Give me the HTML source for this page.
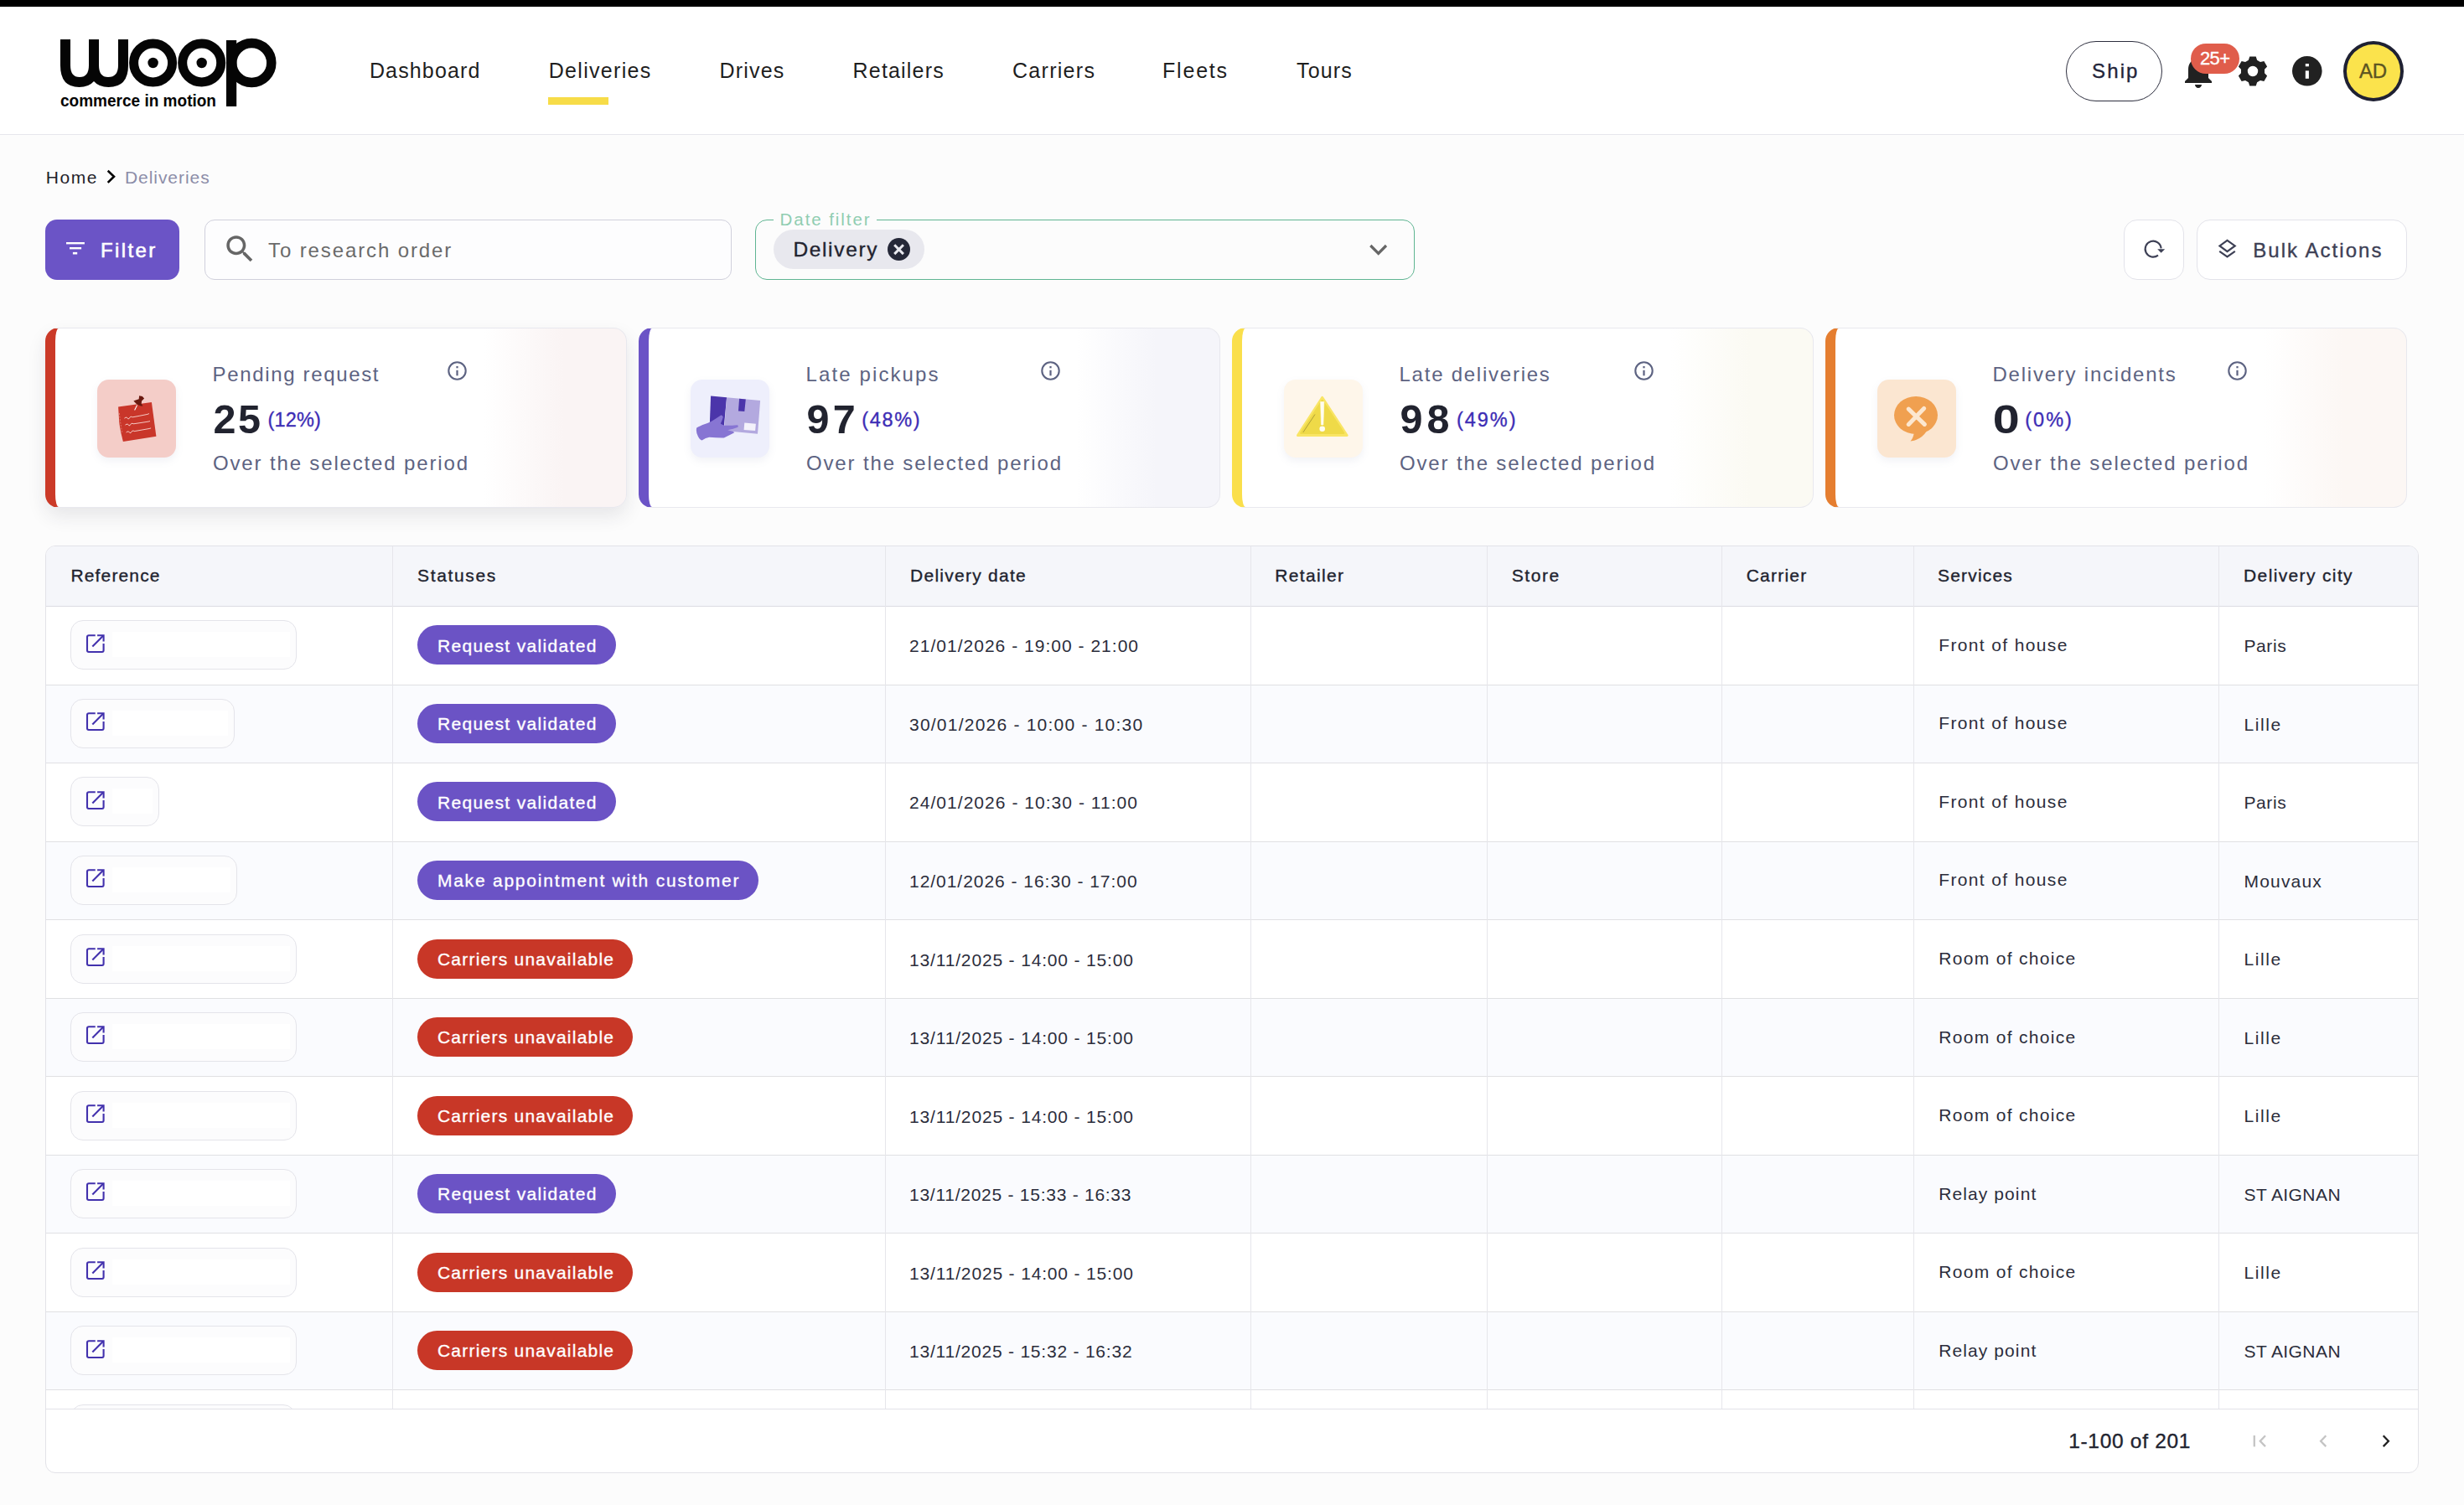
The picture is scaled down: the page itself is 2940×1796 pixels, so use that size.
<!DOCTYPE html>
<html><head><meta charset="utf-8"><title>Deliveries</title>
<style>
html,body{margin:0;padding:0;width:2940px;height:1796px;overflow:hidden;background:#fcfcfc;font-family:'Liberation Sans', sans-serif}
.t{position:absolute;white-space:nowrap;font-family:'Liberation Sans', sans-serif}
@media (max-width:2000px){html{zoom:0.5}}
</style></head><body>
<div style="position:absolute;left:0px;top:0px;width:2940px;height:8px;background:#000"></div>
<div style="position:absolute;left:0px;top:8px;width:2940px;height:152px;background:#fff"></div>
<div style="position:absolute;left:0px;top:160px;width:2940px;height:1px;background:#e6e6ec"></div>
<div style="position:absolute;left:654px;top:116px;width:72px;height:9px;background:#f7dc48"></div>
<div style="position:absolute;left:2465px;top:49px;width:115px;height:72px;box-sizing:border-box;border:1.6px solid #2d2e3e;border-radius:36px;background:#fff"></div>
<div style="position:absolute;left:2795.5px;top:49px;width:72.5px;height:72px;box-sizing:border-box;border:4px solid #1f2133;border-radius:50%;background:#fbe34c"></div>
<div style="position:absolute;left:54px;top:262px;width:160px;height:72px;background:#6b54c6;border-radius:14px"></div>
<div style="position:absolute;left:243.5px;top:262px;width:629px;height:72px;box-sizing:border-box;border:1.6px solid #d0d0dc;border-radius:12px;background:#fdfdfe"></div>
<div style="position:absolute;left:901px;top:262.3px;width:787px;height:71.5px;box-sizing:border-box;border:1.8px solid #5fb592;border-radius:14px;background:transparent"></div>
<div style="position:absolute;left:923px;top:255px;width:123px;height:12px;background:#fcfcfc"></div>
<div style="position:absolute;left:922.6px;top:274px;width:180.4px;height:47px;background:#e8e8ee;border-radius:24px"></div>
<div style="position:absolute;left:1059.3px;top:284.2px;width:27px;height:27px;background:#252838;border-radius:50%"></div>
<div style="position:absolute;left:2534px;top:262px;width:71.5px;height:72px;box-sizing:border-box;border:1.6px solid #e3e3ea;border-radius:16px;background:#fff"></div>
<div style="position:absolute;left:2621px;top:262px;width:251px;height:72px;box-sizing:border-box;border:1.6px solid #e3e3ea;border-radius:16px;background:#fff"></div>
<div style="position:absolute;left:54px;top:391.3px;width:693.5px;height:215px;box-sizing:border-box;border:1.5px solid #e8e8ee;border-left:12.5px solid #cb3a28;border-radius:16px;background:linear-gradient(90deg,#ffffff 75%,#faf4f4 89%);box-shadow:0 10px 22px rgba(40,40,60,0.10);"></div>
<div style="position:absolute;left:116px;top:453px;width:94px;height:93px;background:#f4cdc8;border-radius:14px;box-shadow:0 4px 10px rgba(120,130,170,0.10)"></div>
<div style="position:absolute;left:762px;top:391.3px;width:693.5px;height:215px;box-sizing:border-box;border:1.5px solid #e8e8ee;border-left:12.5px solid #6b53c6;border-radius:16px;background:linear-gradient(90deg,#ffffff 75%,#f5f5fa 89%);"></div>
<div style="position:absolute;left:824px;top:453px;width:94px;height:93px;background:#eeeffc;border-radius:14px;box-shadow:0 4px 10px rgba(120,130,170,0.10)"></div>
<div style="position:absolute;left:1470px;top:391.3px;width:693.5px;height:215px;box-sizing:border-box;border:1.5px solid #e8e8ee;border-left:12.5px solid #fadf4b;border-radius:16px;background:linear-gradient(90deg,#ffffff 75%,#fbfaf3 89%);"></div>
<div style="position:absolute;left:1532px;top:453px;width:94px;height:93px;background:#fef6ea;border-radius:14px;box-shadow:0 4px 10px rgba(120,130,170,0.10)"></div>
<div style="position:absolute;left:2178px;top:391.3px;width:693.5px;height:215px;box-sizing:border-box;border:1.5px solid #e8e8ee;border-left:12.5px solid #e57e30;border-radius:16px;background:linear-gradient(90deg,#ffffff 75%,#fcf7f4 89%);"></div>
<div style="position:absolute;left:2240px;top:453px;width:94px;height:93px;background:#fbe6d1;border-radius:14px;box-shadow:0 4px 10px rgba(120,130,170,0.10)"></div>
<div style="position:absolute;left:54px;top:651px;width:2832px;height:1107px;box-sizing:border-box;border:1px solid #e2e2e8;border-radius:12px;background:#fff;overflow:hidden"></div>
<div style="position:absolute;left:55px;top:652px;width:2830px;height:71px;background:#f5f6fa;border-radius:11px 11px 0 0"></div>
<div style="position:absolute;left:55px;top:818px;width:2830px;height:92px;background:#fafbfe"></div>
<div style="position:absolute;left:55px;top:1005px;width:2830px;height:92px;background:#fafbfe"></div>
<div style="position:absolute;left:55px;top:1192px;width:2830px;height:92px;background:#fafbfe"></div>
<div style="position:absolute;left:55px;top:1379px;width:2830px;height:92px;background:#fafbfe"></div>
<div style="position:absolute;left:55px;top:1566px;width:2830px;height:92px;background:#fafbfe"></div>
<div style="position:absolute;left:55px;top:723px;width:2830px;height:1px;background:#dcdce2"></div>
<div style="position:absolute;left:55px;top:817px;width:2830px;height:1px;background:#e0e0e3"></div>
<div style="position:absolute;left:55px;top:910px;width:2830px;height:1px;background:#e0e0e3"></div>
<div style="position:absolute;left:55px;top:1004px;width:2830px;height:1px;background:#e0e0e3"></div>
<div style="position:absolute;left:55px;top:1097px;width:2830px;height:1px;background:#e0e0e3"></div>
<div style="position:absolute;left:55px;top:1191px;width:2830px;height:1px;background:#e0e0e3"></div>
<div style="position:absolute;left:55px;top:1284px;width:2830px;height:1px;background:#e0e0e3"></div>
<div style="position:absolute;left:55px;top:1378px;width:2830px;height:1px;background:#e0e0e3"></div>
<div style="position:absolute;left:55px;top:1471px;width:2830px;height:1px;background:#e0e0e3"></div>
<div style="position:absolute;left:55px;top:1565px;width:2830px;height:1px;background:#e0e0e3"></div>
<div style="position:absolute;left:55px;top:1658px;width:2830px;height:1px;background:#e0e0e3"></div>
<div style="position:absolute;left:55px;top:1681px;width:2830px;height:1px;background:#e2e2e8"></div>
<div style="position:absolute;left:468px;top:652px;width:1px;height:1029px;background:#e6e6eb"></div>
<div style="position:absolute;left:1056px;top:652px;width:1px;height:1029px;background:#e6e6eb"></div>
<div style="position:absolute;left:1492px;top:652px;width:1px;height:1029px;background:#e6e6eb"></div>
<div style="position:absolute;left:1774px;top:652px;width:1px;height:1029px;background:#e6e6eb"></div>
<div style="position:absolute;left:2054px;top:652px;width:1px;height:1029px;background:#e6e6eb"></div>
<div style="position:absolute;left:2283px;top:652px;width:1px;height:1029px;background:#e6e6eb"></div>
<div style="position:absolute;left:2647px;top:652px;width:1px;height:1029px;background:#e6e6eb"></div>
<div style="position:absolute;left:84.3px;top:740.3px;width:270.2px;height:59px;box-sizing:border-box;border:1.5px solid #e4e4ea;border-radius:15px;background:#fcfcfd"></div>
<div style="position:absolute;left:133.8px;top:754.3px;width:212px;height:30px;background:#ffffff"></div>
<div style="position:absolute;left:498px;top:746.3px;width:237px;height:47px;background:#6b53c5;border-radius:24px"></div>
<div style="position:absolute;left:84.3px;top:833.85px;width:196.2px;height:59px;box-sizing:border-box;border:1.5px solid #e4e4ea;border-radius:15px;background:#fcfcfd"></div>
<div style="position:absolute;left:133.8px;top:847.85px;width:138px;height:30px;background:#ffffff"></div>
<div style="position:absolute;left:498px;top:839.85px;width:237px;height:47px;background:#6b53c5;border-radius:24px"></div>
<div style="position:absolute;left:84.3px;top:927.4px;width:106.2px;height:59px;box-sizing:border-box;border:1.5px solid #e4e4ea;border-radius:15px;background:#fcfcfd"></div>
<div style="position:absolute;left:133.8px;top:941.4px;width:48px;height:30px;background:#ffffff"></div>
<div style="position:absolute;left:498px;top:933.4px;width:237px;height:47px;background:#6b53c5;border-radius:24px"></div>
<div style="position:absolute;left:84.3px;top:1020.95px;width:199.2px;height:59px;box-sizing:border-box;border:1.5px solid #e4e4ea;border-radius:15px;background:#fcfcfd"></div>
<div style="position:absolute;left:133.8px;top:1034.95px;width:141px;height:30px;background:#ffffff"></div>
<div style="position:absolute;left:498px;top:1026.95px;width:407px;height:47px;background:#6b53c5;border-radius:24px"></div>
<div style="position:absolute;left:84.3px;top:1114.5px;width:270.2px;height:59px;box-sizing:border-box;border:1.5px solid #e4e4ea;border-radius:15px;background:#fcfcfd"></div>
<div style="position:absolute;left:133.8px;top:1128.5px;width:212px;height:30px;background:#ffffff"></div>
<div style="position:absolute;left:498px;top:1120.5px;width:257px;height:47px;background:#c83727;border-radius:24px"></div>
<div style="position:absolute;left:84.3px;top:1208.05px;width:270.2px;height:59px;box-sizing:border-box;border:1.5px solid #e4e4ea;border-radius:15px;background:#fcfcfd"></div>
<div style="position:absolute;left:133.8px;top:1222.05px;width:212px;height:30px;background:#ffffff"></div>
<div style="position:absolute;left:498px;top:1214.05px;width:257px;height:47px;background:#c83727;border-radius:24px"></div>
<div style="position:absolute;left:84.3px;top:1301.6px;width:270.2px;height:59px;box-sizing:border-box;border:1.5px solid #e4e4ea;border-radius:15px;background:#fcfcfd"></div>
<div style="position:absolute;left:133.8px;top:1315.6px;width:212px;height:30px;background:#ffffff"></div>
<div style="position:absolute;left:498px;top:1307.6px;width:257px;height:47px;background:#c83727;border-radius:24px"></div>
<div style="position:absolute;left:84.3px;top:1395.15px;width:270.2px;height:59px;box-sizing:border-box;border:1.5px solid #e4e4ea;border-radius:15px;background:#fcfcfd"></div>
<div style="position:absolute;left:133.8px;top:1409.15px;width:212px;height:30px;background:#ffffff"></div>
<div style="position:absolute;left:498px;top:1401.15px;width:237px;height:47px;background:#6b53c5;border-radius:24px"></div>
<div style="position:absolute;left:84.3px;top:1488.7px;width:270.2px;height:59px;box-sizing:border-box;border:1.5px solid #e4e4ea;border-radius:15px;background:#fcfcfd"></div>
<div style="position:absolute;left:133.8px;top:1502.7px;width:212px;height:30px;background:#ffffff"></div>
<div style="position:absolute;left:498px;top:1494.7px;width:257px;height:47px;background:#c83727;border-radius:24px"></div>
<div style="position:absolute;left:84.3px;top:1582.25px;width:270.2px;height:59px;box-sizing:border-box;border:1.5px solid #e4e4ea;border-radius:15px;background:#fcfcfd"></div>
<div style="position:absolute;left:133.8px;top:1596.25px;width:212px;height:30px;background:#ffffff"></div>
<div style="position:absolute;left:498px;top:1588.25px;width:257px;height:47px;background:#c83727;border-radius:24px"></div>
<div style="position:absolute;left:54px;top:1660px;width:2832px;height:21px;overflow:hidden"><div style="position:absolute;left:30.299999999999997px;top:15.5px;width:269px;height:59px;box-sizing:border-box;border:1.5px solid #e4e4ea;border-radius:15px;background:#fcfcfd"></div></div>
<svg style="position:absolute;left:0px;top:0px" width="400" height="160" viewBox="0 0 400 160"><g fill="#050505">
<path d="M72 47 H84 V78 Q84 92 95 92 Q106 92 106 78 V47 H118 V78 Q118 92 129 92 Q141 92 141 78 V47 H153 V78 Q153 104 129.5 104 Q118 104 112 97 Q106 104 94.5 104 Q72 104 72 78 Z"/>
</g>
<circle cx="182.6" cy="75" r="23" fill="none" stroke="#050505" stroke-width="11"/>
<circle cx="182.6" cy="75" r="6.2" fill="#050505"/>
<circle cx="240.7" cy="75" r="23" fill="none" stroke="#050505" stroke-width="11"/>
<circle cx="240.7" cy="75" r="6.2" fill="#050505"/>
<circle cx="300.3" cy="75" r="23.5" fill="none" stroke="#050505" stroke-width="11.5"/>
<rect x="270" y="48" width="12.2" height="79" fill="#050505"/>
<text x="72" y="127" font-family="Liberation Sans" font-weight="700" font-size="19.5" fill="#050505" textLength="186" lengthAdjust="spacingAndGlyphs">commerce in motion</text>
</svg>
<svg style="position:absolute;left:2599px;top:61px" width="48" height="48" viewBox="0 0 24 24"><path fill="#212121" d="M12 22c1.1 0 2-.9 2-2h-4c0 1.1.89 2 2 2zm6-6v-5c0-3.07-1.64-5.64-4.5-6.32V4c0-.83-.67-1.5-1.5-1.5s-1.5.67-1.5 1.5v.68C7.63 5.36 6 7.92 6 11v5l-2 2v1h16v-1l-2-2z"/></svg>
<svg style="position:absolute;left:2614px;top:52px" width="58" height="36" viewBox="0 0 58 36"><rect x="0" y="0" width="58" height="36" rx="18" fill="#e05d4b"/></svg>
<svg style="position:absolute;left:2670.2px;top:66.8px" width="36" height="36" viewBox="0 0 36 36"><path fill="#212121" fill-rule="evenodd" d="M23.09,4.74 L21.74,0.39 L14.26,0.39 L12.91,4.74 L9.06,6.96 L4.62,5.96 L0.88,12.44 L3.97,15.78 L3.97,20.22 L0.88,23.56 L4.62,30.04 L9.06,29.04 L12.91,31.26 L14.26,35.61 L21.74,35.61 L23.09,31.26 L26.94,29.04 L31.38,30.04 L35.12,23.56 L32.03,20.22 L32.03,15.78 L35.12,12.44 L31.38,5.96 L26.94,6.96 Z M24.2,18 A6.2,6.2 0 1 0 11.8,18 A6.2,6.2 0 1 0 24.2,18 Z"/></svg>
<svg style="position:absolute;left:2735px;top:67px" width="36" height="36" viewBox="0 0 36 36"><circle cx="17.8" cy="17.8" r="17.8" fill="#212121"/><rect x="15.8" y="9" width="4.1" height="3.3" fill="#fff"/><rect x="15.8" y="17.4" width="4.1" height="9.4" fill="#fff"/></svg>
<svg style="position:absolute;left:120px;top:198px" width="24" height="26" viewBox="0 0 24 26"><path d="M8.7,5.8 L16,12.7 L8.7,19.9" fill="none" stroke="#000" stroke-width="2.6"/></svg>
<svg style="position:absolute;left:79px;top:289px" width="22" height="15" viewBox="0 0 22 15"><rect x="0" y="0" width="21.9" height="2.4" fill="#fff"/><rect x="4" y="6" width="14.1" height="2.4" fill="#fff"/><rect x="7.9" y="11.9" width="5.3" height="2.6" fill="#fff"/></svg>
<svg style="position:absolute;left:264.7px;top:276.4px" width="42.5" height="42.5" viewBox="0 0 24 24"><path fill="#666" d="M15.5 14h-.79l-.28-.27C15.41 12.59 16 11.11 16 9.5 16 5.91 13.09 3 9.5 3S3 5.91 3 9.5 5.91 16 9.5 16c1.61 0 3.09-.59 4.23-1.57l.27.28v.79l5 4.99L20.49 19l-4.99-5zm-6 0C7.01 14 5 11.990 5 9.5S7.01 5 9.5 5 14 7.01 14 9.5 11.99 14 9.5 14z"/></svg>
<svg style="position:absolute;left:1059.3px;top:284.2px" width="27" height="27" viewBox="0 0 27 27"><path d="M8.2,8.3 L18.9,19.1 M18.9,8.3 L8.2,19.1" stroke="#e8e8ee" stroke-width="3" stroke-linecap="butt"/></svg>
<svg style="position:absolute;left:1630px;top:286px" width="30" height="22" viewBox="0 0 30 22"><path d="M5.3,7 L14.7,16.4 L24,7" fill="none" stroke="#666" stroke-width="3.2"/></svg>
<svg style="position:absolute;left:2554px;top:282px" width="30" height="30" viewBox="0 0 30 30"><path d="M21,22.6 A9.5,9.5 0 1 1 24.6,14.3" fill="none" stroke="#3d4055" stroke-width="2.1"/><path d="M20.2,15.3 L29.2,15.3 L24.6,19.8 Z" fill="#3d4055"/></svg>
<svg style="position:absolute;left:2644px;top:282px" width="28" height="30" viewBox="0 0 28 30"><path d="M13.5,4.8 L4.5,11.4 L13.5,18.2 L22.7,11.4 Z" fill="none" stroke="#3d4055" stroke-width="2.2" stroke-linejoin="miter"/><path d="M4.2,17.9 L13.5,24.3 L22.8,17.9" fill="none" stroke="#3d4055" stroke-width="2.2"/></svg>
<svg style="position:absolute;left:532.7px;top:430.2px" width="25" height="25" viewBox="0 0 25 25"><circle cx="12.5" cy="12.5" r="10.2" fill="none" stroke="#5d6382" stroke-width="2.1"/><rect x="11.4" y="7" width="2.2" height="2.3" fill="#5d6382"/><rect x="11.4" y="11.8" width="2.2" height="6.5" fill="#5d6382"/></svg>
<svg style="position:absolute;left:1240.7px;top:430.2px" width="25" height="25" viewBox="0 0 25 25"><circle cx="12.5" cy="12.5" r="10.2" fill="none" stroke="#5d6382" stroke-width="2.1"/><rect x="11.4" y="7" width="2.2" height="2.3" fill="#5d6382"/><rect x="11.4" y="11.8" width="2.2" height="6.5" fill="#5d6382"/></svg>
<svg style="position:absolute;left:1948.7px;top:430.2px" width="25" height="25" viewBox="0 0 25 25"><circle cx="12.5" cy="12.5" r="10.2" fill="none" stroke="#5d6382" stroke-width="2.1"/><rect x="11.4" y="7" width="2.2" height="2.3" fill="#5d6382"/><rect x="11.4" y="11.8" width="2.2" height="6.5" fill="#5d6382"/></svg>
<svg style="position:absolute;left:2656.7px;top:430.2px" width="25" height="25" viewBox="0 0 25 25"><circle cx="12.5" cy="12.5" r="10.2" fill="none" stroke="#5d6382" stroke-width="2.1"/><rect x="11.4" y="7" width="2.2" height="2.3" fill="#5d6382"/><rect x="11.4" y="11.8" width="2.2" height="6.5" fill="#5d6382"/></svg>
<svg style="position:absolute;left:116px;top:453px" width="94" height="93" viewBox="0 0 94 93"><path d="M25.1,32.6 L64.9,27.1 L70.4,67.7 L30.9,73.9 Q27.5,62 26.2,50.5 Z" fill="#c9362a"/>
<path d="M50.1,19.2 L53.9,20 L56.1,22.6 L53.1,25.6 L52.7,28.7 L54.5,31.5 L51.9,31.4 L47,29.3 L43.4,25.6 L45.2,24.8 L49.7,23.2 Z" fill="#6a1a10"/>
<path d="M47.6,30.6 L44.6,36.5" stroke="#fff" stroke-width="1.1"/>
<path d="M26.4,40 Q27.5,52 29.8,63" fill="none" stroke="#e9a59b" stroke-width="0.6" stroke-dasharray="2 1.5"/>
<path d="M32.4,46.2 q1.5,-1.5 3,-1 q1.5,2.5 2.5,1.5 q1.5,-3 3,-2.5 q1,1 2,0.5 l8,-1.5 l9,-1.8 l2,-0.8" fill="none" stroke="#fbe3de" stroke-width="0.85"/>
<path d="M33.5,54.2 q1.5,-1.5 3,-1 q1.5,2.5 2.5,1.5 q1.5,-3 3,-2.5 q1,1 2,0.5 l8,-1.2 l9,-1.4 l2,-0.6" fill="none" stroke="#fbe3de" stroke-width="0.85"/>
<path d="M34.6,63 q1.5,-1.5 3,-1 q1.5,2.5 2.5,1.5 q1.5,-3 3,-2.5 q1,1 2,0.5 l8,-1.4 l9,-1.6 l2,-0.6" fill="none" stroke="#fbe3de" stroke-width="0.85"/></svg>
<svg style="position:absolute;left:824px;top:453px" width="94" height="93" viewBox="0 0 94 93"><path d="M24.1,19.4 L43.1,21.2 L39.9,55 L22.8,54 Z" fill="#4b35aa"/>
<path d="M43.1,21.2 L83.1,24.9 L80,64.7 L39.9,61 Z" fill="#b3a9df"/>
<path d="M58.1,22.7 L65.8,23.4 L64.3,38 L57,37.6 Z" fill="#4b35aa"/>
<path d="M64.3,51.5 L77.9,52.7 L77.1,61 L63.6,60 Z" fill="#f4f2fb"/>
<path d="M7.2,57.5 Q6,63 9,68 Q11.5,72.5 13.5,72.4 Q18,69.5 22.3,68.7 Q31,69.5 39.8,69.4 Q46,66.5 52.3,63.2 Q50.5,61.5 44.2,60.3 Q51,58.8 56.5,56.8 Q57.2,54.3 55.5,54.2 Q48,55 40.6,54.8 Q37.5,54 35.8,52.6 Q37.8,48.5 38.8,44.8 Q37.8,42 36.2,42.6 Q32,45.5 28.2,47.8 Q24,50.8 20.1,52 Q13,54 7.2,57.5 Z" fill="#8775d3"/></svg>
<svg style="position:absolute;left:1532px;top:453px" width="94" height="93" viewBox="0 0 94 93"><path d="M45.7,21.5 L75,66.5 L16.6,66.5 Z" fill="#f9e565" stroke="#f9e565" stroke-width="3.2" stroke-linejoin="round"/>
<path d="M45.7,25 L71.2,63.8 L20.2,63.8 Z" fill="#efda48" stroke="#efda48" stroke-width="2.2" stroke-linejoin="round"/>
<path d="M43.6,26.5 L47.8,26.5 L46.9,54 L44.5,54 Z" fill="#fffdf0" stroke="#fffdf0" stroke-width="0.6" stroke-linejoin="round"/>
<circle cx="45.7" cy="58.8" r="3.3" fill="#fffdf0"/>
<path d="M22.8,63 L37,41.5" stroke="#3a3520" stroke-width="0.5" opacity="0.7"/></svg>
<svg style="position:absolute;left:2240px;top:453px" width="94" height="93" viewBox="0 0 94 93"><ellipse cx="46" cy="42.5" rx="26" ry="22.5" fill="#f0a050"/>
<path d="M44,62 Q43,70 39.5,73.5 Q52,72 58.5,62 Z" fill="#f0a050"/>
<path d="M37.3,35.1 L56.3,53.4 M55.6,34.4 L37.3,53.4" stroke="#fce7d0" stroke-width="5" stroke-linecap="round"/></svg>
<svg style="position:absolute;left:102px;top:755.6px" width="24" height="24" viewBox="0 0 24 24"><path d="M11.75,2.2 H4 Q2,2.2 2,4.2 V20 Q2,22 4,22 H19.8 Q21.6,22 21.6,20 V12.1" fill="none" stroke="#4231ad" stroke-width="2.1"/><path d="M14.1,2.2 H21.6 V9.6" fill="none" stroke="#4231ad" stroke-width="2.1"/><path d="M8.3,15.5 L21,2.8" stroke="#4231ad" stroke-width="2.1"/></svg>
<svg style="position:absolute;left:102px;top:849.15px" width="24" height="24" viewBox="0 0 24 24"><path d="M11.75,2.2 H4 Q2,2.2 2,4.2 V20 Q2,22 4,22 H19.8 Q21.6,22 21.6,20 V12.1" fill="none" stroke="#4231ad" stroke-width="2.1"/><path d="M14.1,2.2 H21.6 V9.6" fill="none" stroke="#4231ad" stroke-width="2.1"/><path d="M8.3,15.5 L21,2.8" stroke="#4231ad" stroke-width="2.1"/></svg>
<svg style="position:absolute;left:102px;top:942.7px" width="24" height="24" viewBox="0 0 24 24"><path d="M11.75,2.2 H4 Q2,2.2 2,4.2 V20 Q2,22 4,22 H19.8 Q21.6,22 21.6,20 V12.1" fill="none" stroke="#4231ad" stroke-width="2.1"/><path d="M14.1,2.2 H21.6 V9.6" fill="none" stroke="#4231ad" stroke-width="2.1"/><path d="M8.3,15.5 L21,2.8" stroke="#4231ad" stroke-width="2.1"/></svg>
<svg style="position:absolute;left:102px;top:1036.25px" width="24" height="24" viewBox="0 0 24 24"><path d="M11.75,2.2 H4 Q2,2.2 2,4.2 V20 Q2,22 4,22 H19.8 Q21.6,22 21.6,20 V12.1" fill="none" stroke="#4231ad" stroke-width="2.1"/><path d="M14.1,2.2 H21.6 V9.6" fill="none" stroke="#4231ad" stroke-width="2.1"/><path d="M8.3,15.5 L21,2.8" stroke="#4231ad" stroke-width="2.1"/></svg>
<svg style="position:absolute;left:102px;top:1129.8px" width="24" height="24" viewBox="0 0 24 24"><path d="M11.75,2.2 H4 Q2,2.2 2,4.2 V20 Q2,22 4,22 H19.8 Q21.6,22 21.6,20 V12.1" fill="none" stroke="#4231ad" stroke-width="2.1"/><path d="M14.1,2.2 H21.6 V9.6" fill="none" stroke="#4231ad" stroke-width="2.1"/><path d="M8.3,15.5 L21,2.8" stroke="#4231ad" stroke-width="2.1"/></svg>
<svg style="position:absolute;left:102px;top:1223.35px" width="24" height="24" viewBox="0 0 24 24"><path d="M11.75,2.2 H4 Q2,2.2 2,4.2 V20 Q2,22 4,22 H19.8 Q21.6,22 21.6,20 V12.1" fill="none" stroke="#4231ad" stroke-width="2.1"/><path d="M14.1,2.2 H21.6 V9.6" fill="none" stroke="#4231ad" stroke-width="2.1"/><path d="M8.3,15.5 L21,2.8" stroke="#4231ad" stroke-width="2.1"/></svg>
<svg style="position:absolute;left:102px;top:1316.9px" width="24" height="24" viewBox="0 0 24 24"><path d="M11.75,2.2 H4 Q2,2.2 2,4.2 V20 Q2,22 4,22 H19.8 Q21.6,22 21.6,20 V12.1" fill="none" stroke="#4231ad" stroke-width="2.1"/><path d="M14.1,2.2 H21.6 V9.6" fill="none" stroke="#4231ad" stroke-width="2.1"/><path d="M8.3,15.5 L21,2.8" stroke="#4231ad" stroke-width="2.1"/></svg>
<svg style="position:absolute;left:102px;top:1410.45px" width="24" height="24" viewBox="0 0 24 24"><path d="M11.75,2.2 H4 Q2,2.2 2,4.2 V20 Q2,22 4,22 H19.8 Q21.6,22 21.6,20 V12.1" fill="none" stroke="#4231ad" stroke-width="2.1"/><path d="M14.1,2.2 H21.6 V9.6" fill="none" stroke="#4231ad" stroke-width="2.1"/><path d="M8.3,15.5 L21,2.8" stroke="#4231ad" stroke-width="2.1"/></svg>
<svg style="position:absolute;left:102px;top:1504.0px" width="24" height="24" viewBox="0 0 24 24"><path d="M11.75,2.2 H4 Q2,2.2 2,4.2 V20 Q2,22 4,22 H19.8 Q21.6,22 21.6,20 V12.1" fill="none" stroke="#4231ad" stroke-width="2.1"/><path d="M14.1,2.2 H21.6 V9.6" fill="none" stroke="#4231ad" stroke-width="2.1"/><path d="M8.3,15.5 L21,2.8" stroke="#4231ad" stroke-width="2.1"/></svg>
<svg style="position:absolute;left:102px;top:1597.55px" width="24" height="24" viewBox="0 0 24 24"><path d="M11.75,2.2 H4 Q2,2.2 2,4.2 V20 Q2,22 4,22 H19.8 Q21.6,22 21.6,20 V12.1" fill="none" stroke="#4231ad" stroke-width="2.1"/><path d="M14.1,2.2 H21.6 V9.6" fill="none" stroke="#4231ad" stroke-width="2.1"/><path d="M8.3,15.5 L21,2.8" stroke="#4231ad" stroke-width="2.1"/></svg>
<svg style="position:absolute;left:2686px;top:1708px" width="22" height="22" viewBox="0 0 22 22"><path d="M3.8,5 V18.4" stroke="#c4c4c4" stroke-width="2.3"/><path d="M17,5.3 L10.8,11.7 L17,18.1" fill="none" stroke="#c4c4c4" stroke-width="2.3"/></svg>
<svg style="position:absolute;left:2762px;top:1708px" width="22" height="22" viewBox="0 0 22 22"><path d="M13.3,5.3 L7.1,11.7 L13.3,18.1" fill="none" stroke="#c4c4c4" stroke-width="2.3"/></svg>
<svg style="position:absolute;left:2838px;top:1708px" width="22" height="22" viewBox="0 0 22 22"><path d="M5.7,5.3 L11.9,11.7 L5.7,18.1" fill="none" stroke="#222" stroke-width="2.3"/></svg>
<div class="t" style="left:440.90px;top:72.00px;font-size:25px;line-height:25px;letter-spacing:1.150px;color:#1e1e1e;font-weight:400;">Dashboard</div>
<div class="t" style="left:654.70px;top:72.00px;font-size:25px;line-height:25px;letter-spacing:1.311px;color:#1e1e1e;font-weight:400;">Deliveries</div>
<div class="t" style="left:858.50px;top:72.00px;font-size:25px;line-height:25px;letter-spacing:1.180px;color:#1e1e1e;font-weight:400;">Drives</div>
<div class="t" style="left:1017.60px;top:72.00px;font-size:25px;line-height:25px;letter-spacing:1.175px;color:#1e1e1e;font-weight:400;">Retailers</div>
<div class="t" style="left:1208.00px;top:72.00px;font-size:25px;line-height:25px;letter-spacing:1.286px;color:#1e1e1e;font-weight:400;">Carriers</div>
<div class="t" style="left:1387.00px;top:72.00px;font-size:25px;line-height:25px;letter-spacing:1.800px;color:#1e1e1e;font-weight:400;">Fleets</div>
<div class="t" style="left:1547.00px;top:72.00px;font-size:25px;line-height:25px;letter-spacing:1.175px;color:#1e1e1e;font-weight:400;">Tours</div>
<div class="t" style="left:2496.10px;top:73.20px;font-size:24px;line-height:24px;letter-spacing:2.100px;color:#23253a;font-weight:400;-webkit-text-stroke:0.35px currentColor">Ship</div>
<div class="t" style="left:2624.90px;top:59.00px;font-size:22px;line-height:22px;letter-spacing:-0.550px;color:#ffffff;font-weight:400;-webkit-text-stroke:0.35px currentColor">25+</div>
<div class="t" style="left:2815.00px;top:72.80px;font-size:24px;line-height:24px;letter-spacing:-0.300px;color:#5c5522;font-weight:400;-webkit-text-stroke:0.35px currentColor">AD</div>
<div class="t" style="left:54.80px;top:201.00px;font-size:21px;line-height:21px;letter-spacing:1.533px;color:#1f1f2b;font-weight:400;">Home</div>
<div class="t" style="left:148.90px;top:201.00px;font-size:21px;line-height:21px;letter-spacing:0.956px;color:#8c8da8;font-weight:400;">Deliveries</div>
<div class="t" style="left:119.90px;top:286.50px;font-size:24px;line-height:24px;letter-spacing:2.400px;color:#ffffff;font-weight:400;-webkit-text-stroke:0.6px #fff">Filter</div>
<div class="t" style="left:320.00px;top:286.50px;font-size:24px;line-height:24px;letter-spacing:1.887px;color:#6a6a6a;font-weight:400;">To research order</div>
<div class="t" style="left:930.60px;top:251.90px;font-size:20.5px;line-height:20.5px;letter-spacing:1.930px;color:#8fcdb1;font-weight:400;">Date filter</div>
<div class="t" style="left:946.40px;top:286.10px;font-size:24.5px;line-height:24.5px;letter-spacing:1.657px;color:#22232f;font-weight:400;-webkit-text-stroke:0.35px currentColor">Delivery</div>
<div class="t" style="left:2688.20px;top:286.90px;font-size:24px;line-height:24px;letter-spacing:2.045px;color:#3d4055;font-weight:400;-webkit-text-stroke:0.35px currentColor">Bulk Actions</div>
<div class="t" style="left:253.50px;top:434.80px;font-size:24px;line-height:24px;letter-spacing:1.657px;color:#5d6382;font-weight:400;">Pending request</div>
<div class="t" style="left:254.50px;top:475.70px;font-size:48.5px;line-height:48.5px;letter-spacing:2.500px;color:#21232f;font-weight:700;">25</div>
<div class="t" style="left:319.40px;top:489.50px;font-size:23.5px;line-height:23.5px;letter-spacing:0.200px;color:#3d2db5;font-weight:400;-webkit-text-stroke:0.35px currentColor">(12%)</div>
<div class="t" style="left:254.00px;top:541.00px;font-size:24px;line-height:24px;letter-spacing:1.848px;color:#5d6382;font-weight:400;">Over the selected period</div>
<div class="t" style="left:961.50px;top:434.80px;font-size:24px;line-height:24px;letter-spacing:2.118px;color:#5d6382;font-weight:400;">Late pickups</div>
<div class="t" style="left:962.50px;top:475.70px;font-size:48.5px;line-height:48.5px;letter-spacing:4.400px;color:#21232f;font-weight:700;">97</div>
<div class="t" style="left:1028.30px;top:489.50px;font-size:23.5px;line-height:23.5px;letter-spacing:1.675px;color:#3d2db5;font-weight:400;-webkit-text-stroke:0.35px currentColor">(48%)</div>
<div class="t" style="left:962.00px;top:541.00px;font-size:24px;line-height:24px;letter-spacing:1.848px;color:#5d6382;font-weight:400;">Over the selected period</div>
<div class="t" style="left:1669.50px;top:434.80px;font-size:24px;line-height:24px;letter-spacing:1.757px;color:#5d6382;font-weight:400;">Late deliveries</div>
<div class="t" style="left:1670.50px;top:475.70px;font-size:48.5px;line-height:48.5px;letter-spacing:5.000px;color:#21232f;font-weight:700;">98</div>
<div class="t" style="left:1737.90px;top:489.50px;font-size:23.5px;line-height:23.5px;letter-spacing:2.000px;color:#3d2db5;font-weight:400;-webkit-text-stroke:0.35px currentColor">(49%)</div>
<div class="t" style="left:1670.00px;top:541.00px;font-size:24px;line-height:24px;letter-spacing:1.848px;color:#5d6382;font-weight:400;">Over the selected period</div>
<div class="t" style="left:2377.50px;top:434.80px;font-size:24px;line-height:24px;letter-spacing:1.776px;color:#5d6382;font-weight:400;">Delivery incidents</div>
<div class="t" style="left:2377.50px;top:475.70px;font-size:48.5px;line-height:48.5px;letter-spacing:0.000px;color:#21232f;font-weight:700;transform:scaleX(1.1870);transform-origin:2px 0;">0</div>
<div class="t" style="left:2416.20px;top:489.50px;font-size:23.5px;line-height:23.5px;letter-spacing:2.033px;color:#3d2db5;font-weight:400;-webkit-text-stroke:0.35px currentColor">(0%)</div>
<div class="t" style="left:2378.00px;top:541.00px;font-size:24px;line-height:24px;letter-spacing:1.848px;color:#5d6382;font-weight:400;">Over the selected period</div>
<div class="t" style="left:84.50px;top:676.00px;font-size:21px;line-height:21px;letter-spacing:1.137px;color:#21232f;font-weight:400;-webkit-text-stroke:0.35px currentColor">Reference</div>
<div class="t" style="left:498.10px;top:676.00px;font-size:21px;line-height:21px;letter-spacing:1.629px;color:#21232f;font-weight:400;-webkit-text-stroke:0.35px currentColor">Statuses</div>
<div class="t" style="left:1086.10px;top:676.00px;font-size:21px;line-height:21px;letter-spacing:1.250px;color:#21232f;font-weight:400;-webkit-text-stroke:0.35px currentColor">Delivery date</div>
<div class="t" style="left:1521.30px;top:676.00px;font-size:21px;line-height:21px;letter-spacing:1.343px;color:#21232f;font-weight:400;-webkit-text-stroke:0.35px currentColor">Retailer</div>
<div class="t" style="left:1803.80px;top:676.00px;font-size:21px;line-height:21px;letter-spacing:1.550px;color:#21232f;font-weight:400;-webkit-text-stroke:0.35px currentColor">Store</div>
<div class="t" style="left:2083.70px;top:676.00px;font-size:21px;line-height:21px;letter-spacing:1.217px;color:#21232f;font-weight:400;-webkit-text-stroke:0.35px currentColor">Carrier</div>
<div class="t" style="left:2312.10px;top:676.00px;font-size:21px;line-height:21px;letter-spacing:1.157px;color:#21232f;font-weight:400;-webkit-text-stroke:0.35px currentColor">Services</div>
<div class="t" style="left:2677.10px;top:676.00px;font-size:21px;line-height:21px;letter-spacing:1.358px;color:#21232f;font-weight:400;-webkit-text-stroke:0.35px currentColor">Delivery city</div>
<div class="t" style="left:1085.00px;top:760.30px;font-size:21px;line-height:21px;letter-spacing:1.020px;color:#2b2d3b;font-weight:400;">21/01/2026 - 19:00 - 21:00</div>
<div class="t" style="left:2313.20px;top:758.80px;font-size:21px;line-height:21px;letter-spacing:1.369px;color:#2b2d3b;font-weight:400;">Front of house</div>
<div class="t" style="left:2677.50px;top:760.00px;font-size:21px;line-height:21px;letter-spacing:0.575px;color:#2b2d3b;font-weight:400;">Paris</div>
<div class="t" style="left:521.90px;top:759.50px;font-size:21px;line-height:21px;letter-spacing:1.338px;color:#ffffff;font-weight:400;-webkit-text-stroke:0.35px currentColor">Request validated</div>
<div class="t" style="left:1085.00px;top:853.85px;font-size:21px;line-height:21px;letter-spacing:1.224px;color:#2b2d3b;font-weight:400;">30/01/2026 - 10:00 - 10:30</div>
<div class="t" style="left:2313.20px;top:852.35px;font-size:21px;line-height:21px;letter-spacing:1.369px;color:#2b2d3b;font-weight:400;">Front of house</div>
<div class="t" style="left:2677.50px;top:853.55px;font-size:21px;line-height:21px;letter-spacing:1.575px;color:#2b2d3b;font-weight:400;">Lille</div>
<div class="t" style="left:521.90px;top:853.05px;font-size:21px;line-height:21px;letter-spacing:1.338px;color:#ffffff;font-weight:400;-webkit-text-stroke:0.35px currentColor">Request validated</div>
<div class="t" style="left:1085.00px;top:947.40px;font-size:21px;line-height:21px;letter-spacing:1.040px;color:#2b2d3b;font-weight:400;">24/01/2026 - 10:30 - 11:00</div>
<div class="t" style="left:2313.20px;top:945.90px;font-size:21px;line-height:21px;letter-spacing:1.369px;color:#2b2d3b;font-weight:400;">Front of house</div>
<div class="t" style="left:2677.50px;top:947.10px;font-size:21px;line-height:21px;letter-spacing:0.575px;color:#2b2d3b;font-weight:400;">Paris</div>
<div class="t" style="left:521.90px;top:946.60px;font-size:21px;line-height:21px;letter-spacing:1.338px;color:#ffffff;font-weight:400;-webkit-text-stroke:0.35px currentColor">Request validated</div>
<div class="t" style="left:1085.00px;top:1040.95px;font-size:21px;line-height:21px;letter-spacing:0.964px;color:#2b2d3b;font-weight:400;">12/01/2026 - 16:30 - 17:00</div>
<div class="t" style="left:2313.20px;top:1039.45px;font-size:21px;line-height:21px;letter-spacing:1.369px;color:#2b2d3b;font-weight:400;">Front of house</div>
<div class="t" style="left:2677.50px;top:1040.65px;font-size:21px;line-height:21px;letter-spacing:1.183px;color:#2b2d3b;font-weight:400;">Mouvaux</div>
<div class="t" style="left:521.90px;top:1040.15px;font-size:21px;line-height:21px;letter-spacing:1.772px;color:#ffffff;font-weight:400;-webkit-text-stroke:0.35px currentColor">Make appointment with customer</div>
<div class="t" style="left:1085.00px;top:1134.50px;font-size:21px;line-height:21px;letter-spacing:0.840px;color:#2b2d3b;font-weight:400;">13/11/2025 - 14:00 - 15:00</div>
<div class="t" style="left:2313.20px;top:1133.00px;font-size:21px;line-height:21px;letter-spacing:1.323px;color:#2b2d3b;font-weight:400;">Room of choice</div>
<div class="t" style="left:2677.50px;top:1134.20px;font-size:21px;line-height:21px;letter-spacing:1.575px;color:#2b2d3b;font-weight:400;">Lille</div>
<div class="t" style="left:521.90px;top:1133.70px;font-size:21px;line-height:21px;letter-spacing:1.232px;color:#ffffff;font-weight:400;-webkit-text-stroke:0.35px currentColor">Carriers unavailable</div>
<div class="t" style="left:1085.00px;top:1228.05px;font-size:21px;line-height:21px;letter-spacing:0.840px;color:#2b2d3b;font-weight:400;">13/11/2025 - 14:00 - 15:00</div>
<div class="t" style="left:2313.20px;top:1226.55px;font-size:21px;line-height:21px;letter-spacing:1.323px;color:#2b2d3b;font-weight:400;">Room of choice</div>
<div class="t" style="left:2677.50px;top:1227.75px;font-size:21px;line-height:21px;letter-spacing:1.575px;color:#2b2d3b;font-weight:400;">Lille</div>
<div class="t" style="left:521.90px;top:1227.25px;font-size:21px;line-height:21px;letter-spacing:1.232px;color:#ffffff;font-weight:400;-webkit-text-stroke:0.35px currentColor">Carriers unavailable</div>
<div class="t" style="left:1085.00px;top:1321.60px;font-size:21px;line-height:21px;letter-spacing:0.840px;color:#2b2d3b;font-weight:400;">13/11/2025 - 14:00 - 15:00</div>
<div class="t" style="left:2313.20px;top:1320.10px;font-size:21px;line-height:21px;letter-spacing:1.323px;color:#2b2d3b;font-weight:400;">Room of choice</div>
<div class="t" style="left:2677.50px;top:1321.30px;font-size:21px;line-height:21px;letter-spacing:1.575px;color:#2b2d3b;font-weight:400;">Lille</div>
<div class="t" style="left:521.90px;top:1320.80px;font-size:21px;line-height:21px;letter-spacing:1.232px;color:#ffffff;font-weight:400;-webkit-text-stroke:0.35px currentColor">Carriers unavailable</div>
<div class="t" style="left:1085.00px;top:1415.15px;font-size:21px;line-height:21px;letter-spacing:0.740px;color:#2b2d3b;font-weight:400;">13/11/2025 - 15:33 - 16:33</div>
<div class="t" style="left:2313.20px;top:1413.65px;font-size:21px;line-height:21px;letter-spacing:1.100px;color:#2b2d3b;font-weight:400;">Relay point</div>
<div class="t" style="left:2677.50px;top:1414.85px;font-size:21px;line-height:21px;letter-spacing:0.425px;color:#2b2d3b;font-weight:400;">ST AIGNAN</div>
<div class="t" style="left:521.90px;top:1414.35px;font-size:21px;line-height:21px;letter-spacing:1.338px;color:#ffffff;font-weight:400;-webkit-text-stroke:0.35px currentColor">Request validated</div>
<div class="t" style="left:1085.00px;top:1508.70px;font-size:21px;line-height:21px;letter-spacing:0.840px;color:#2b2d3b;font-weight:400;">13/11/2025 - 14:00 - 15:00</div>
<div class="t" style="left:2313.20px;top:1507.20px;font-size:21px;line-height:21px;letter-spacing:1.323px;color:#2b2d3b;font-weight:400;">Room of choice</div>
<div class="t" style="left:2677.50px;top:1508.40px;font-size:21px;line-height:21px;letter-spacing:1.575px;color:#2b2d3b;font-weight:400;">Lille</div>
<div class="t" style="left:521.90px;top:1507.90px;font-size:21px;line-height:21px;letter-spacing:1.232px;color:#ffffff;font-weight:400;-webkit-text-stroke:0.35px currentColor">Carriers unavailable</div>
<div class="t" style="left:1085.00px;top:1602.25px;font-size:21px;line-height:21px;letter-spacing:0.784px;color:#2b2d3b;font-weight:400;">13/11/2025 - 15:32 - 16:32</div>
<div class="t" style="left:2313.20px;top:1600.75px;font-size:21px;line-height:21px;letter-spacing:1.100px;color:#2b2d3b;font-weight:400;">Relay point</div>
<div class="t" style="left:2677.50px;top:1601.95px;font-size:21px;line-height:21px;letter-spacing:0.425px;color:#2b2d3b;font-weight:400;">ST AIGNAN</div>
<div class="t" style="left:521.90px;top:1601.45px;font-size:21px;line-height:21px;letter-spacing:1.232px;color:#ffffff;font-weight:400;-webkit-text-stroke:0.35px currentColor">Carriers unavailable</div>
<div class="t" style="left:2468.20px;top:1708.00px;font-size:24.5px;line-height:24.5px;letter-spacing:0.700px;color:#21232f;font-weight:400;-webkit-text-stroke:0.35px currentColor">1-100 of 201</div>
</body></html>
